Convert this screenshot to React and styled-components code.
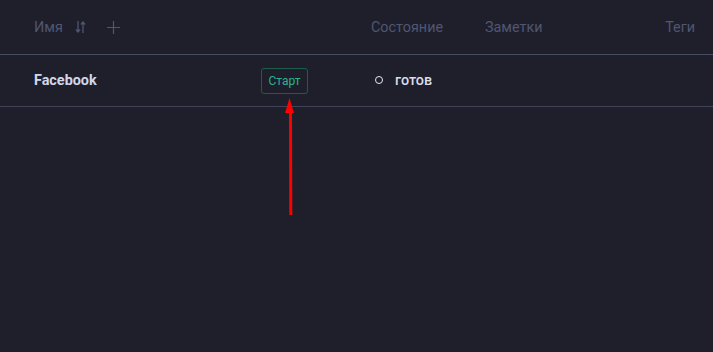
import React from 'react';
import styled, { createGlobalStyle } from 'styled-components';

const GlobalStyle = createGlobalStyle`
	html, body {
		margin: 0;
		padding: 0;
		background: #1f1f2b;
	}
	body {
		font-family: Roboto, 'Liberation Sans', sans-serif;
		width: 713px;
		height: 352px;
		overflow: hidden;
	}
`;

const Page = styled.div`
	position: relative;
	width: 713px;
	height: 352px;
	background: #1f1f2b;
`;

const Grid = styled.div`
	display: grid;
	grid-template-columns: 227px 110px 114px 1fr auto;
	align-items: center;
	padding: 0 18px 0 34px;
	border-bottom: 1px solid ${(p) => p.line};
	height: ${(p) => p.h}px;
	box-sizing: border-box;
`;

const HeadCell = styled.div`
	display: flex;
	align-items: center;
	font-size: 14.4px;
	color: #4f5672;
	justify-self: ${(p) => (p.end ? 'end' : 'start')};
`;

const IconBtn = styled.span`
	display: inline-flex;
	margin-left: ${(p) => p.gap}px;
	color: #4f5672;
`;

const Name = styled.div`
	font-size: 14.4px;
	font-weight: 700;
	color: #d3d7ea;
	margin-top: -1px;
`;

const StartButton = styled.button`
	font-family: Roboto, 'Liberation Sans', sans-serif;
	font-size: 12px;
	color: #27b58c;
	background: transparent;
	border: 1px solid #1d5b4b;
	border-radius: 3px;
	height: 26px;
	width: 47px;
	padding: 0;
	margin-top: 1px;
`;

const Status = styled.div`
	display: flex;
	align-items: center;
	gap: 12px;
	font-size: 14.4px;
	font-weight: 500;
	color: #dadcea;
	padding-left: 4px;
	margin-top: -1px;
`;

const Dot = styled.span`
	width: 6px;
	height: 6px;
	border: 1.5px solid #e4e6f0;
	border-radius: 50%;
`;

const Pointer = styled.svg`
	position: absolute;
	left: 280px;
	top: 97px;
`;

const SortIcon = () => (
	<svg width="12" height="14" viewBox="0 0 12 14" fill="none" stroke="currentColor" strokeWidth="1.3">
		<path d="M3 1v11M1 9.5l2 2.5 2-2.5" />
		<path d="M8 13V2M6 4.5l2-2.5 2 2.5" />
	</svg>
);

const PlusIcon = () => (
	<svg width="13" height="13" viewBox="0 0 13 13" fill="none" stroke="currentColor" strokeWidth="1.2">
		<path d="M6.5 0v13M0 6.5h13" />
	</svg>
);

const App = () => (
	<Page>
		<GlobalStyle />
		<Grid h={55} line="#464b63">
			<HeadCell>
				Имя
				<IconBtn gap={12}>
					<SortIcon />
				</IconBtn>
				<IconBtn gap={20}>
					<PlusIcon />
				</IconBtn>
			</HeadCell>
			<div />
			<HeadCell>Состояние</HeadCell>
			<HeadCell>Заметки</HeadCell>
			<HeadCell end>Теги</HeadCell>
		</Grid>
		<Grid h={52} line="#3f4357">
			<Name>Facebook</Name>
			<div>
				<StartButton>Старт</StartButton>
			</div>
			<Status>
				<Dot />
				готов
			</Status>
			<div />
			<div />
		</Grid>
		<Pointer width="20" height="120" viewBox="0 0 20 120">
			<path d="M10.5 14 L10.8 118" stroke="#ff0000" strokeWidth="3" />
			<path d="M9.5 1 L5 16 L14 16 Z" fill="#ff0000" />
		</Pointer>
	</Page>
);

export default App;
